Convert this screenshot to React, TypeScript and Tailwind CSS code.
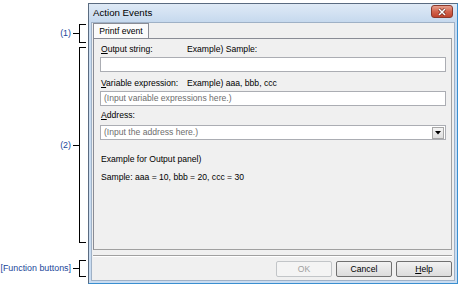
import React from 'react';

type BracketProps = {
    label: string;
    className: string;
};

const Bracket: React.FC<BracketProps> = ({ label, className }) => (
    <div className={`flex items-center ${className}`}>
        <span className="flex-1 text-right leading-none whitespace-nowrap pr-[2px]">{label}</span>
        <div className="w-[6px] h-px bg-black" />
        <div className="w-[7px] h-full border-l border-t border-b border-black" />
    </div>
);

const Field: React.FC<{ placeholder?: string }> = ({ placeholder }) => (
    <div className="h-[15px] bg-white border border-[#abadb3] flex items-center pl-[3px] text-[#6d6d6d] leading-none">
        {placeholder}
    </div>
);

const DialogButton: React.FC<{ children: React.ReactNode; disabled?: boolean }> = ({ children, disabled }) => (
    <button
        className={
            disabled
                ? 'w-[56px] h-[16px] rounded-[2px] border border-[#c2c5c8] bg-[#f4f4f4] text-[#a0a0a0] leading-none'
                : 'w-[56px] h-[16px] rounded-[2px] border border-[#707070] bg-gradient-to-b from-[#f2f2f2] to-[#dcdcdc] text-black leading-none'
        }
    >
        {children}
    </button>
);

export default function App() {
    return (
        <div className="w-[473px] h-[287px] bg-white flex overflow-hidden font-['Liberation_Sans',Arial,sans-serif] text-black">
            {/* Annotations */}
            <div className="w-[88px] flex flex-col pr-[2px] text-[8.9px] text-[#21479a]">
                <Bracket label="(1)" className="mt-[24px] h-[19px]" />
                <Bracket label="(2)" className="mt-[4px] h-[196px]" />
                <Bracket label="[Function buttons]" className="mt-[17px] h-[17px]" />
            </div>

            {/* Dialog window */}
            <div className="mt-[3px] w-[370px] h-[281px] flex flex-col border border-[#5a6b80] border-r-[#3a8fd0] border-b-[#3a8fd0] bg-[#c9dcf1]">
                {/* Title bar */}
                <div className="h-[18px] flex items-start justify-between pl-[4px] pr-[4px] bg-gradient-to-b from-[#dfeaf6] to-[#c6d9ee]">
                    <span className="text-[9.7px] leading-[17px]">Action Events</span>
                    <div className="mt-[1px] w-[22px] h-[13px] rounded-[3px] border border-[#8b3a2c] bg-gradient-to-b from-[#e6a08f] via-[#d2644d] to-[#c0432c] flex items-center justify-center">
                        <svg width="10" height="8" viewBox="0 0 10 8">
                            <path d="M2 1 L8 7 M8 1 L2 7" stroke="#5a1a10" strokeWidth="2.6" />
                            <path d="M2 1 L8 7 M8 1 L2 7" stroke="#ffffff" strokeWidth="1.6" />
                        </svg>
                    </div>
                </div>

                {/* Client area */}
                <div className="flex-1 mx-[2px] mb-[2px] border border-[#9fb1c6] bg-[#f0f0f0] flex flex-col pl-[1px] pr-[2px] pb-[3px] text-[8.6px]">
                    {/* Tab header */}
                    <div className="h-[15px] flex">
                        <div className="w-[56px] h-[15px] border-t border-l border-r border-[#898c95] bg-[#fbfbfb] flex items-center justify-center leading-none">
                            Printf event
                        </div>
                    </div>

                    {/* Tab page */}
                    <div className="flex-1 border border-[#898c95] border-r-[#a0a0a0] border-b-[#a0a0a0] bg-[#f0f0f0] flex flex-col pt-[5px] pl-[7px] pr-[5px]">
                        <div className="flex h-[11px] items-center leading-none">
                            <span className="w-[86px]">
                                <span className="underline underline-offset-1">O</span>utput string:
                            </span>
                            <span>Example) Sample:</span>
                        </div>
                        <div className="mt-[2px] -ml-px">
                            <Field />
                        </div>

                        <div className="mt-[6px] flex h-[11px] items-center leading-none">
                            <span className="w-[86px]">
                                <span className="underline underline-offset-1">V</span>ariable expression:
                            </span>
                            <span>Example) aaa, bbb, ccc</span>
                        </div>
                        <div className="mt-[2px] -ml-px">
                            <Field placeholder="(Input variable expressions here.)" />
                        </div>

                        <div className="mt-[4px] h-[11px] flex items-center leading-none">
                            <span className="underline underline-offset-1">A</span>ddress:
                        </div>
                        <div className="mt-[4px] -ml-px h-[15px] bg-white border border-[#abadb3] flex items-center pl-[3px] pr-px text-[#6d6d6d] leading-none">
                            <span className="flex-1">(Input the address here.)</span>
                            <div className="w-[12px] h-[12px] border border-[#a7a7a7] bg-gradient-to-b from-[#f4f4f4] to-[#dedede] flex items-center justify-center">
                                <svg width="6" height="4" viewBox="0 0 6 4">
                                    <polygon points="0,0 6,0 3,3.5" fill="#000" />
                                </svg>
                            </div>
                        </div>

                        <div className="mt-[14px] h-[11px] flex items-center leading-none">Example for Output panel)</div>
                        <div className="mt-[7px] h-[11px] flex items-center leading-none">
                            Sample: aaa = 10, bbb = 20, ccc = 30
                        </div>
                    </div>

                    {/* Separator */}
                    <div className="mt-[5px] h-px bg-[#a0a0a0]" />
                    <div className="h-px bg-white" />

                    {/* Function buttons */}
                    <div className="mt-[4px] flex justify-end gap-[4px]">
                        <DialogButton disabled>OK</DialogButton>
                        <DialogButton>Cancel</DialogButton>
                        <DialogButton>
                            <span className="underline underline-offset-1">H</span>elp
                        </DialogButton>
                    </div>
                </div>
            </div>
        </div>
    );
}
